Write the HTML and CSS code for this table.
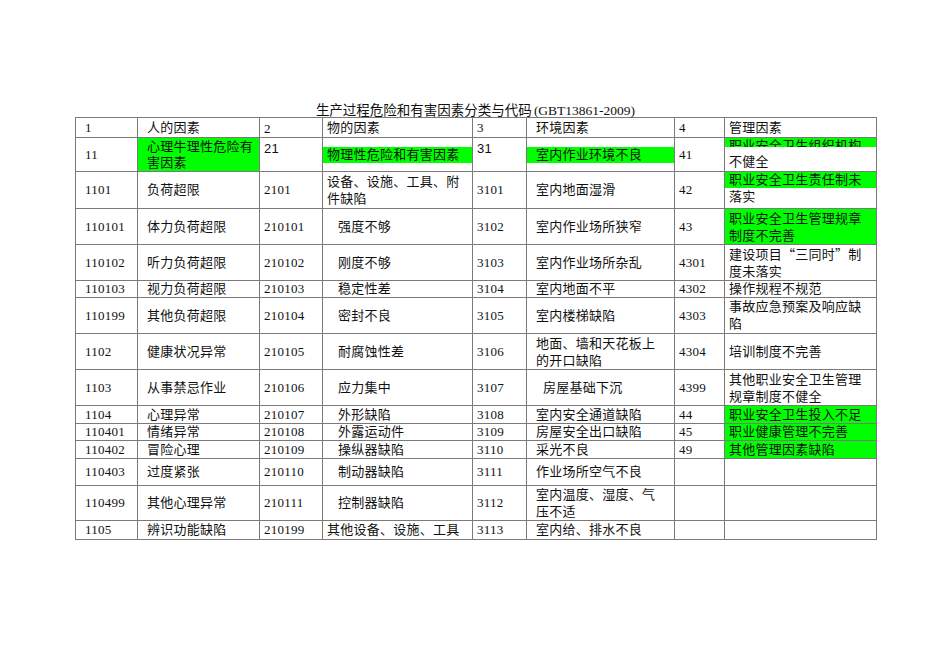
FILE: index.html
```html
<!DOCTYPE html>
<html lang="zh-CN">
<head>
<meta charset="utf-8">
<title>生产过程危险和有害因素分类与代码</title>
<link rel="stylesheet" href="styles.css">
</head>
<body>
<div class="page">
  <div class="title">生产过程危险和有害因素分类与代码<span class="latin">(GBT13861-2009)</span></div>
  <table class="grid">
    <colgroup>
      <col class="w1"><col class="w2"><col class="w3"><col class="w4"><col class="w5"><col class="w6"><col class="w7"><col class="w8">
    </colgroup>
    <tr class="h20">
      <td>1</td><td>人的因素</td><td class="bot">2</td><td>物的因素</td><td>3</td><td>环境因素</td><td>4</td><td>管理因素</td>
    </tr>
    <tr class="h34">
      <td>11</td>
      <td class="hl l16">心理牛理性危险有<br>害因素</td>
      <td class="top sans">21</td>
      <td><div class="band">物理性危险和有害因素</div></td>
      <td class="top sans">31</td>
      <td><div class="band">室内作业环境不良</div></td>
      <td>41</td>
      <td class="top"><div class="band clip">职业安全卫生组织机构</div><div class="after-clip">不健全</div></td>
    </tr>
    <tr class="h37">
      <td>1101</td><td>负荷超限</td><td>2101</td>
      <td class="l18">设备、设施、工具、附<br>件缺陷</td>
      <td>3101</td><td>室内地面湿滑</td><td>42</td>
      <td class="top"><div class="band">职业安全卫生责任制未</div><div class="l17">落实</div></td>
    </tr>
    <tr class="h36">
      <td>110101</td><td>体力负荷超限</td><td>210101</td><td class="ind">强度不够</td>
      <td>3102</td><td>室内作业场所狭窄</td><td>43</td>
      <td class="hl l175">职业安全卫生管理规章<br>制度不完善</td>
    </tr>
    <tr class="h36">
      <td>110102</td><td>听力负荷超限</td><td>210102</td><td class="ind">刚度不够</td>
      <td>3103</td><td>室内作业场所杂乱</td><td>4301</td>
      <td class="l175">建设项目<span class="cjk">“</span>三同时<span class="cjk">”</span>制<br>度未落实</td>
    </tr>
    <tr class="h17">
      <td>110103</td><td>视力负荷超限</td><td>210103</td><td class="ind">稳定性差</td>
      <td>3104</td><td>室内地面不平</td><td>4302</td><td>操作规程不规范</td>
    </tr>
    <tr class="h36">
      <td>110199</td><td>其他负荷超限</td><td>210104</td><td class="ind">密封不良</td>
      <td>3105</td><td>室内楼梯缺陷</td><td>4303</td>
      <td class="l175 top">事故应急预案及响应缺<br>陷</td>
    </tr>
    <tr class="h36">
      <td>1102</td><td>健康状况异常</td><td>210105</td><td class="ind">耐腐蚀性差</td>
      <td>3106</td><td class="l175">地面、墙和天花板上<br>的开口缺陷</td><td>4304</td><td>培训制度不完善</td>
    </tr>
    <tr class="h36">
      <td>1103</td><td>从事禁忌作业</td><td>210106</td><td class="ind">应力集中</td>
      <td>3107</td><td class="ind2">房屋基础下沉</td><td>4399</td>
      <td class="l175">其他职业安全卫生管理<br>规章制度不健全</td>
    </tr>
    <tr class="h18">
      <td>1104</td><td>心理异常</td><td>210107</td><td class="ind">外形缺陷</td>
      <td>3108</td><td>室内安全通道缺陷</td><td>44</td><td class="hl">职业安全卫生投入不足</td>
    </tr>
    <tr class="h17">
      <td>110401</td><td>情绪异常</td><td class="bot">210108</td><td class="ind">外露运动件</td>
      <td>3109</td><td>房屋安全出口缺陷</td><td>45</td><td class="hl">职业健康管理不完善</td>
    </tr>
    <tr class="h18">
      <td>110402</td><td>冒险心理</td><td>210109</td><td class="ind">操纵器缺陷</td>
      <td>3110</td><td>采光不良</td><td>49</td><td class="hl">其他管理因素缺陷</td>
    </tr>
    <tr class="h27">
      <td>110403</td><td>过度紧张</td><td>210110</td><td class="ind">制动器缺陷</td>
      <td>3111</td><td>作业场所空气不良</td><td></td><td></td>
    </tr>
    <tr class="h35">
      <td>110499</td><td>其他心理异常</td><td>210111</td><td class="ind">控制器缺陷</td>
      <td>3112</td><td class="l175">室内温度、湿度、气<br>压不适</td><td></td><td></td>
    </tr>
    <tr class="h19">
      <td>1105</td><td>辨识功能缺陷</td><td>210199</td><td>其他设备、设施、工具</td>
      <td>3113</td><td>室内给、排水不良</td><td></td><td></td>
    </tr>
  </table>
</div>
</body>
</html>
```
FILE: styles.css
```css
html, body {
  margin: 0;
  background: #ffffff;
}

body {
  font-family: "Liberation Serif", "Noto Sans CJK SC", serif;
  color: #111111;
}

.page {
  padding: 100px 0 0 75px;
  width: 801px;
}

.title {
  text-align: center;
  font-size: 13.5px;
  line-height: 17px;
  height: 15px;
  padding-top: 2px;
  white-space: nowrap;
}

.title .latin {
  padding-left: 2px;
}

.grid {
  border-collapse: collapse;
  table-layout: fixed;
  width: 801px;
  font-size: 13px;
  line-height: 16px;
  letter-spacing: 0.25px;
}

.w1 { width: 62px; }
.w2 { width: 122px; }
.w3 { width: 63px; }
.w4 { width: 150px; }
.w5 { width: 54px; }
.w6 { width: 148px; }
.w7 { width: 50px; }
.w8 { width: 152px; }

.grid td {
  border: 1px solid #7a7a7a;
  padding: 0 4px 0 var(--pl);
  vertical-align: middle;
  white-space: nowrap;
  overflow: hidden;
}

.grid td:nth-child(1) { --pl: 9px; }
.grid td:nth-child(2) { --pl: 9px; }
.grid td:nth-child(3) { --pl: 4px; }
.grid td:nth-child(4) { --pl: 4px; }
.grid td:nth-child(5) { --pl: 4px; }
.grid td:nth-child(6) { --pl: 9px; }
.grid td:nth-child(7) { --pl: 4px; }
.grid td:nth-child(8) { --pl: 4px; }

.h17 { height: 17px; }
.h18 { height: 18px; }
.h19 { height: 19px; }
.h20 { height: 20px; }
.h27 { height: 27px; }
.h34 { height: 34px; }
.h35 { height: 35px; }
.h36 { height: 36px; }
.h37 { height: 37px; }

.grid td.top { vertical-align: top; }
.grid td.bot { vertical-align: bottom; }

.sans {
  font-family: "Liberation Sans", "Noto Sans CJK SC", sans-serif;
  padding-top: 3px !important;
}

.cjk {
  font-family: "Noto Sans CJK SC", sans-serif;
}

.hl { background: #00ff00; }

.l16 { line-height: 16px; }
.l17 { line-height: 17px; }
.l175 { line-height: 17px; }
.l18 { line-height: 17.5px; }

.ind { text-indent: 11px; }
.ind2 { text-indent: 7px; }

.band {
  background: #00ff00;
  margin: 0 -4px 0 calc(-1 * var(--pl));
  padding-left: var(--pl);
  line-height: 16px;
}

.clip {
  height: 9px;
  overflow: hidden;
}

.after-clip {
  margin-top: 7px;
  line-height: 16px;
}
```
